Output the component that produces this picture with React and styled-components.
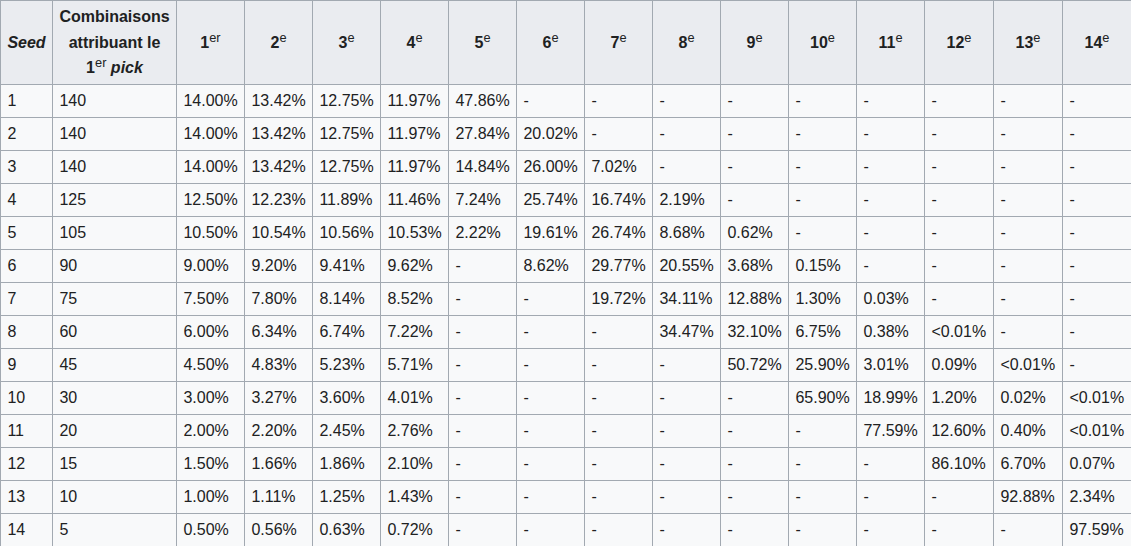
import styled, { createGlobalStyle } from "styled-components"

const GlobalStyle = createGlobalStyle`
  body {
    margin: 0;
    background: #ffffff;
    font-family: "Liberation Sans", Arial, sans-serif;
    color: #202122;
  }
`

const places = ["er", "e", "e", "e", "e", "e", "e", "e", "e", "e", "e", "e", "e", "e"]

const rows = [
  [1, 140, ["14.00%", "13.42%", "12.75%", "11.97%", "47.86%", "-", "-", "-", "-", "-", "-", "-", "-", "-"]],
  [2, 140, ["14.00%", "13.42%", "12.75%", "11.97%", "27.84%", "20.02%", "-", "-", "-", "-", "-", "-", "-", "-"]],
  [3, 140, ["14.00%", "13.42%", "12.75%", "11.97%", "14.84%", "26.00%", "7.02%", "-", "-", "-", "-", "-", "-", "-"]],
  [4, 125, ["12.50%", "12.23%", "11.89%", "11.46%", "7.24%", "25.74%", "16.74%", "2.19%", "-", "-", "-", "-", "-", "-"]],
  [5, 105, ["10.50%", "10.54%", "10.56%", "10.53%", "2.22%", "19.61%", "26.74%", "8.68%", "0.62%", "-", "-", "-", "-", "-"]],
  [6, 90, ["9.00%", "9.20%", "9.41%", "9.62%", "-", "8.62%", "29.77%", "20.55%", "3.68%", "0.15%", "-", "-", "-", "-"]],
  [7, 75, ["7.50%", "7.80%", "8.14%", "8.52%", "-", "-", "19.72%", "34.11%", "12.88%", "1.30%", "0.03%", "-", "-", "-"]],
  [8, 60, ["6.00%", "6.34%", "6.74%", "7.22%", "-", "-", "-", "34.47%", "32.10%", "6.75%", "0.38%", "<0.01%", "-", "-"]],
  [9, 45, ["4.50%", "4.83%", "5.23%", "5.71%", "-", "-", "-", "-", "50.72%", "25.90%", "3.01%", "0.09%", "<0.01%", "-"]],
  [10, 30, ["3.00%", "3.27%", "3.60%", "4.01%", "-", "-", "-", "-", "-", "65.90%", "18.99%", "1.20%", "0.02%", "<0.01%"]],
  [11, 20, ["2.00%", "2.20%", "2.45%", "2.76%", "-", "-", "-", "-", "-", "-", "77.59%", "12.60%", "0.40%", "<0.01%"]],
  [12, 15, ["1.50%", "1.66%", "1.86%", "2.10%", "-", "-", "-", "-", "-", "-", "-", "86.10%", "6.70%", "0.07%"]],
  [13, 10, ["1.00%", "1.11%", "1.25%", "1.43%", "-", "-", "-", "-", "-", "-", "-", "-", "92.88%", "2.34%"]],
  [14, 5, ["0.50%", "0.56%", "0.63%", "0.72%", "-", "-", "-", "-", "-", "-", "-", "-", "-", "97.59%"]],
]

// seed, combinaisons, 1er..11e at 68px, 12e..14e at 69px
const colWidths = [52, 124, 68, 68, 68, 68, 68, 68, 68, 68, 68, 68, 68, 69, 69, 69]

export default function App() {
  return (
    <>
      <GlobalStyle />
      <Table>
        <colgroup>
          {colWidths.map((w, i) => (
            <col key={i} style={{ width: w }} />
          ))}
        </colgroup>
        <thead>
          <tr>
            <Th><em>Seed</em></Th>
            <Th>
              Combinaisons attribuant le 1<Sup>er</Sup> <em>pick</em>
            </Th>
            {places.map((s, i) => (
              <Th key={i}>
                {i + 1}
                <Sup>{s}</Sup>
              </Th>
            ))}
          </tr>
        </thead>
        <tbody>
          {rows.map(([seed, combos, values]) => (
            <tr key={seed}>
              <Td>{seed}</Td>
              <Td>{combos}</Td>
              {values.map((v, i) => (
                <Td key={i}>{v}</Td>
              ))}
            </tr>
          ))}
        </tbody>
      </Table>
    </>
  )
}

const Table = styled.table`
  width: 1131px;
  table-layout: fixed;
  border-collapse: collapse;
  border: 1px solid #a2a9b1;
  background: #f8f9fa;
  color: #202122;
  font-size: 16px;
  line-height: 1.6;
`

const Th = styled.th`
  background: #eaecf0;
  border: 1px solid #a2a9b1;
  padding: 3.2px 6.4px;
  font-weight: bold;
  text-align: center;
  vertical-align: middle;
`

const Td = styled.td`
  border: 1px solid #a2a9b1;
  padding: 3.2px 6.4px;
  text-align: left;
  white-space: nowrap;
`

const Sup = styled.sup`
  font-size: 0.8em;
  line-height: 1;
  vertical-align: super;
  font-weight: normal;
`
